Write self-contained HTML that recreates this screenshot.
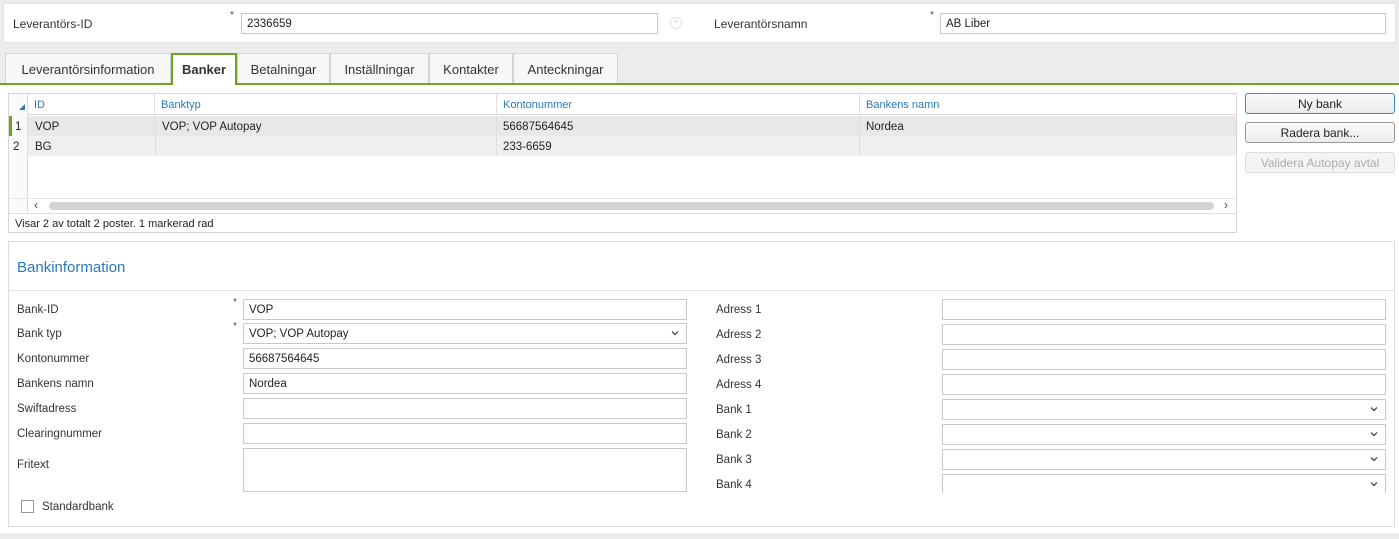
<!DOCTYPE html>
<html><head><meta charset="utf-8">
<style>
*{box-sizing:border-box;margin:0;padding:0}
body{width:1399px;height:539px;background:#ececec;font-family:"Liberation Sans",sans-serif;font-size:11.5px;color:#222;position:relative;overflow:hidden}
.a{position:absolute}
.in{position:absolute;background:#fff;border:1px solid #c8c8c8;height:21px;padding:4px 5px 0;font-size:11.5px;white-space:nowrap}
.lbl{position:absolute;font-size:11.5px;color:#333}
.star{position:absolute;font-size:10px;color:#444}
.chev{position:absolute;right:6px;top:4px;width:10px;height:10px}
.tab{position:absolute;top:53px;height:30px;background:#f7f7f7;border:1px solid #d4d4d4;border-bottom:none;font-size:13px;color:#333;padding-top:8px;text-align:center}
.hd{position:absolute;top:93px;height:22px;color:#2a7ab8;font-size:11px;padding:6px 6px;border-right:1px solid #ddd}
.cell{position:absolute;font-size:11.5px;padding:5px 6px 0;border-right:1px solid #e0e0e0;height:20px}
.btn{position:absolute;left:1245px;width:150px;height:21px;border:1px solid #adadad;border-radius:3px;background:linear-gradient(#fafafa,#ececec);text-align:center;font-size:12px;padding-top:3px}
</style></head><body>
<div class="a" style="left:3px;top:3px;width:1393px;height:40px;background:#fff;border:1px solid #e2e2e2"></div>
<div class="lbl" style="left:13px;top:17px;font-size:12px">Leverantörs-ID</div>
<div class="star" style="left:230px;top:10px">*</div>
<div class="in" style="left:241px;top:13px;width:417px;height:21px">2336659</div>
<div class="a" style="left:670px;top:17px;width:12px;height:12px;border:1px solid #e2e2e2;border-radius:50%;color:#ddd;font-size:10px;line-height:10px;text-align:center">+</div>
<div class="lbl" style="left:714px;top:17px;font-size:12px">Leverantörsnamn</div>
<div class="star" style="left:930px;top:10px">*</div>
<div class="in" style="left:940px;top:13px;width:446px;height:21px">AB Liber</div>

<div class="tab" style="left:5px;width:166px">Leverantörsinformation</div>
<div class="tab" style="left:171px;width:66px;background:#fff;border:2px solid #6aa622;border-bottom:none;height:32px;font-weight:bold;z-index:2;padding-top:7px">Banker</div>
<div class="tab" style="left:237px;width:93px">Betalningar</div>
<div class="tab" style="left:330px;width:99px">Inställningar</div>
<div class="tab" style="left:429px;width:84px">Kontakter</div>
<div class="tab" style="left:513px;width:105px">Anteckningar</div>
<div class="a" style="left:0;top:83px;width:1399px;height:2px;background:#6aa622"></div>
<div class="a" style="left:0;top:85px;width:1399px;height:448px;background:#fff"></div>

<div class="a" style="left:8px;top:93px;width:1229px;height:140px;border:1px solid #d6d6d6;background:#fff"></div>
<div class="a" style="left:9px;top:94px;width:1227px;height:21px;background:#fff;border-bottom:1px solid #ddd"></div>
<div class="a" style="left:9px;top:94px;width:19px;height:118px;border-right:1px solid #ddd;background:#fafafa"></div>
<div class="a" style="left:19px;top:104px;width:0;height:0;border-left:6px solid transparent;border-bottom:6px solid #2a7ab8"></div>
<div class="hd" style="left:28px;width:127px">ID</div>
<div class="hd" style="left:155px;width:342px">Banktyp</div>
<div class="hd" style="left:497px;width:363px">Kontonummer</div>
<div class="hd" style="left:860px;width:376px;border-right:none">Bankens namn</div>
<div class="a" style="left:28px;top:116px;width:1208px;height:20px;background:#e8e8e8"></div>
<div class="a" style="left:28px;top:136px;width:1208px;height:20px;background:#efefef"></div>
<div class="a" style="left:9px;top:116px;width:3px;height:20px;background:#6aa622"></div>
<div class="cell" style="left:13px;top:116px;border:none;padding:5px 2px 0">1</div>
<div class="cell" style="left:11px;top:136px;border:none;padding:5px 2px 0">2</div>
<div class="cell" style="left:29px;top:116px;width:126px;border:none">VOP</div>
<div class="cell" style="left:155px;top:116px;width:342px;border-left:1px solid #ddd;border-right:1px solid #ddd">VOP; VOP Autopay</div>
<div class="cell" style="left:497px;top:116px;width:363px;border-right:1px solid #ddd">56687564645</div>
<div class="cell" style="left:860px;top:116px;width:376px;border:none">Nordea</div>
<div class="cell" style="left:29px;top:136px;width:126px;border:none">BG</div>
<div class="cell" style="left:155px;top:136px;width:342px;border-left:1px solid #ddd;border-right:1px solid #ddd"></div>
<div class="cell" style="left:497px;top:136px;width:363px;border-right:1px solid #ddd">233-6659</div>
<div class="a" style="left:9px;top:198px;width:1227px;height:1px;background:#e6e6e6"></div>
<div class="a" style="left:34px;top:198px;font-size:12px;color:#444">‹</div>
<div class="a" style="left:49px;top:202px;width:1165px;height:8px;border-radius:4px;background:#d4d4d4"></div>
<div class="a" style="left:1224px;top:198px;font-size:12px;color:#444">›</div>
<div class="a" style="left:9px;top:213px;width:1227px;height:1px;background:#ddd"></div>
<div class="a" style="left:15px;top:218px;font-size:11px;color:#222">Visar 2 av totalt 2 poster. 1 markerad rad</div>

<div class="btn" style="top:93px;border-color:#3a8ed0">Ny bank</div>
<div class="btn" style="top:122px;border-color:#999">Radera bank...</div>
<div class="btn" style="top:152px;color:#aaa;border-color:#ddd;background:#f4f4f4">Validera Autopay avtal</div>

<div class="a" style="left:8px;top:241px;width:1387px;height:286px;border:1px solid #dcdcdc;background:#fff"></div>
<div class="a" style="left:17px;top:259px;font-size:15px;color:#2a7ab8">Bankinformation</div>
<div class="a" style="left:9px;top:290px;width:1385px;height:1px;background:#e4e4e4"></div>

<div class="lbl" style="left:17px;top:304px">Bank-ID</div>
<div class="lbl" style="left:17px;top:328px">Bank typ</div>
<div class="lbl" style="left:17px;top:353px">Kontonummer</div>
<div class="lbl" style="left:17px;top:378px">Bankens namn</div>
<div class="lbl" style="left:17px;top:403px">Swiftadress</div>
<div class="lbl" style="left:17px;top:428px">Clearingnummer</div>
<div class="lbl" style="left:17px;top:459px">Fritext</div>
<div class="star" style="left:233px;top:297px">*</div>
<div class="star" style="left:233px;top:321px">*</div>
<div class="in" style="left:243px;top:299px;width:444px">VOP</div>
<div class="in" style="left:243px;top:323px;width:444px">VOP; VOP Autopay<svg class="chev" viewBox="0 0 10 10"><path d="M2 3.5L5 6.5L8 3.5" fill="none" stroke="#333" stroke-width="1.2"/></svg></div>
<div class="in" style="left:243px;top:348px;width:444px">56687564645</div>
<div class="in" style="left:243px;top:373px;width:444px">Nordea</div>
<div class="in" style="left:243px;top:398px;width:444px"></div>
<div class="in" style="left:243px;top:423px;width:444px"></div>
<div class="in" style="left:243px;top:448px;width:444px;height:44px"></div>
<div class="a" style="left:21px;top:500px;width:13px;height:13px;border:1px solid #999;background:#fff"></div>
<div class="lbl" style="left:42px;top:501px">Standardbank</div>

<div class="lbl" style="left:716px;top:304px">Adress 1</div>
<div class="lbl" style="left:716px;top:329px">Adress 2</div>
<div class="lbl" style="left:716px;top:354px">Adress 3</div>
<div class="lbl" style="left:716px;top:379px">Adress 4</div>
<div class="lbl" style="left:716px;top:404px">Bank 1</div>
<div class="lbl" style="left:716px;top:429px">Bank 2</div>
<div class="lbl" style="left:716px;top:454px">Bank 3</div>
<div class="lbl" style="left:716px;top:479px">Bank 4</div>
<div class="in" style="left:942px;top:299px;width:444px"></div>
<div class="in" style="left:942px;top:324px;width:444px"></div>
<div class="in" style="left:942px;top:349px;width:444px"></div>
<div class="in" style="left:942px;top:374px;width:444px"></div>
<div class="in" style="left:942px;top:399px;width:444px"><svg class="chev" viewBox="0 0 10 10"><path d="M2 3.5L5 6.5L8 3.5" fill="none" stroke="#333" stroke-width="1.2"/></svg></div>
<div class="in" style="left:942px;top:424px;width:444px"><svg class="chev" viewBox="0 0 10 10"><path d="M2 3.5L5 6.5L8 3.5" fill="none" stroke="#333" stroke-width="1.2"/></svg></div>
<div class="in" style="left:942px;top:449px;width:444px"><svg class="chev" viewBox="0 0 10 10"><path d="M2 3.5L5 6.5L8 3.5" fill="none" stroke="#333" stroke-width="1.2"/></svg></div>
<div class="in" style="left:942px;top:474px;width:444px;height:19px;border-bottom:none"><svg class="chev" viewBox="0 0 10 10"><path d="M2 3.5L5 6.5L8 3.5" fill="none" stroke="#333" stroke-width="1.2"/></svg></div>
<div class="a" style="left:0;top:533px;width:1399px;height:6px;background:#ececec"></div>
</body></html>
